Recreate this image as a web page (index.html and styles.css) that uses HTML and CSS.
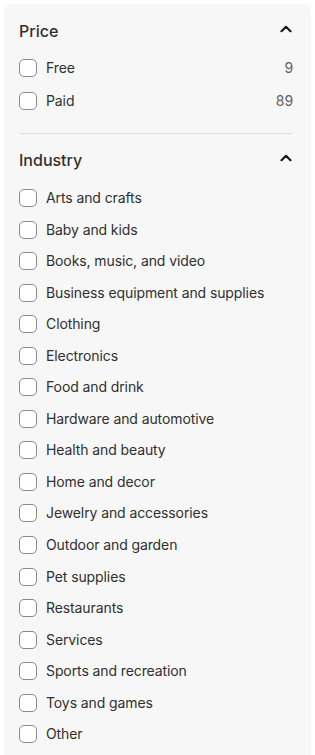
FILE: index.html
```html
<!DOCTYPE html>
<html>
<head>
<meta charset="utf-8">
<link rel="stylesheet" href="styles.css">
</head>
<body>
<div class="panel">
  <section class="group">
    <div class="group-head">
      <h2 class="group-title">Price</h2>
      <svg class="chev" viewBox="0 0 12 8" width="12" height="8"><path d="M1.5 6.2 L6 1.8 L10.5 6.2" fill="none" stroke="#1a1a1a" stroke-width="2.2" stroke-linecap="round" stroke-linejoin="round"/></svg>
    </div>
    <ul class="list list-price">
      <li class="row"><span class="box"></span><span class="label">Free</span><span class="count">9</span></li>
      <li class="row"><span class="box"></span><span class="label">Paid</span><span class="count">89</span></li>
    </ul>
  </section>
  <section class="group group-last">
    <div class="group-head">
      <h2 class="group-title">Industry</h2>
      <svg class="chev" viewBox="0 0 12 8" width="12" height="8"><path d="M1.5 6.2 L6 1.8 L10.5 6.2" fill="none" stroke="#1a1a1a" stroke-width="2.2" stroke-linecap="round" stroke-linejoin="round"/></svg>
    </div>
    <ul class="list list-industry">
      <li class="row"><span class="box"></span><span class="label">Arts and crafts</span></li>
      <li class="row"><span class="box"></span><span class="label">Baby and kids</span></li>
      <li class="row"><span class="box"></span><span class="label">Books, music, and video</span></li>
      <li class="row"><span class="box"></span><span class="label">Business equipment and supplies</span></li>
      <li class="row"><span class="box"></span><span class="label">Clothing</span></li>
      <li class="row"><span class="box"></span><span class="label">Electronics</span></li>
      <li class="row"><span class="box"></span><span class="label">Food and drink</span></li>
      <li class="row"><span class="box"></span><span class="label">Hardware and automotive</span></li>
      <li class="row"><span class="box"></span><span class="label">Health and beauty</span></li>
      <li class="row"><span class="box"></span><span class="label">Home and decor</span></li>
      <li class="row"><span class="box"></span><span class="label">Jewelry and accessories</span></li>
      <li class="row"><span class="box"></span><span class="label">Outdoor and garden</span></li>
      <li class="row"><span class="box"></span><span class="label">Pet supplies</span></li>
      <li class="row"><span class="box"></span><span class="label">Restaurants</span></li>
      <li class="row"><span class="box"></span><span class="label">Services</span></li>
      <li class="row"><span class="box"></span><span class="label">Sports and recreation</span></li>
      <li class="row"><span class="box"></span><span class="label">Toys and games</span></li>
      <li class="row"><span class="box"></span><span class="label">Other</span></li>
    </ul>
  </section>
</div>
</body>
</html>
```

FILE: styles.css
```css
* { box-sizing: border-box; }
html, body { margin: 0; padding: 0; background: #ffffff; }
body {
  font-family: Inter, "Noto Sans", "Liberation Sans", sans-serif;
  color: #303030;
  padding: 4px 4px 0 4px;
}
.panel {
  background: #f7f7f7;
  border-radius: 8px;
  padding: 15px 18px 20px 15px;
  min-height: 780px;
}
.group {
  padding-bottom: 22px;
  border-bottom: 1px solid #dedede;
}
.group-last {
  border-bottom: none;
  padding-top: 14px;
}
.group-head {
  display: flex;
  align-items: center;
  justify-content: space-between;
  height: 24px;
  margin-bottom: 15px;
}
.group-last .group-head {
  margin-bottom: 16px;
}
.group-title {
  margin: 0;
  font-size: 16px;
  font-weight: 450;
  line-height: 24px;
  color: #303030;
}
.chev {
  display: block;
  margin-right: 1px;
  margin-top: -5px;
}
.list {
  list-style: none;
  margin: 0;
  padding: 0;
  display: flex;
  flex-direction: column;
}
.list-price { gap: 13px; }
.list-industry { gap: 11.55px; }
.row {
  display: flex;
  align-items: center;
  height: 20px;
  font-size: 14px;
  line-height: 20px;
  letter-spacing: -0.1px;
}
.box {
  width: 18px;
  height: 18px;
  border: 1.5px solid #8a8a8a;
  border-radius: 5px;
  background: #ffffff;
  flex: none;
  margin-right: 9px;
}
.label {
  flex: 1;
  color: #303030;
}
.count {
  color: #616161;
}
```
